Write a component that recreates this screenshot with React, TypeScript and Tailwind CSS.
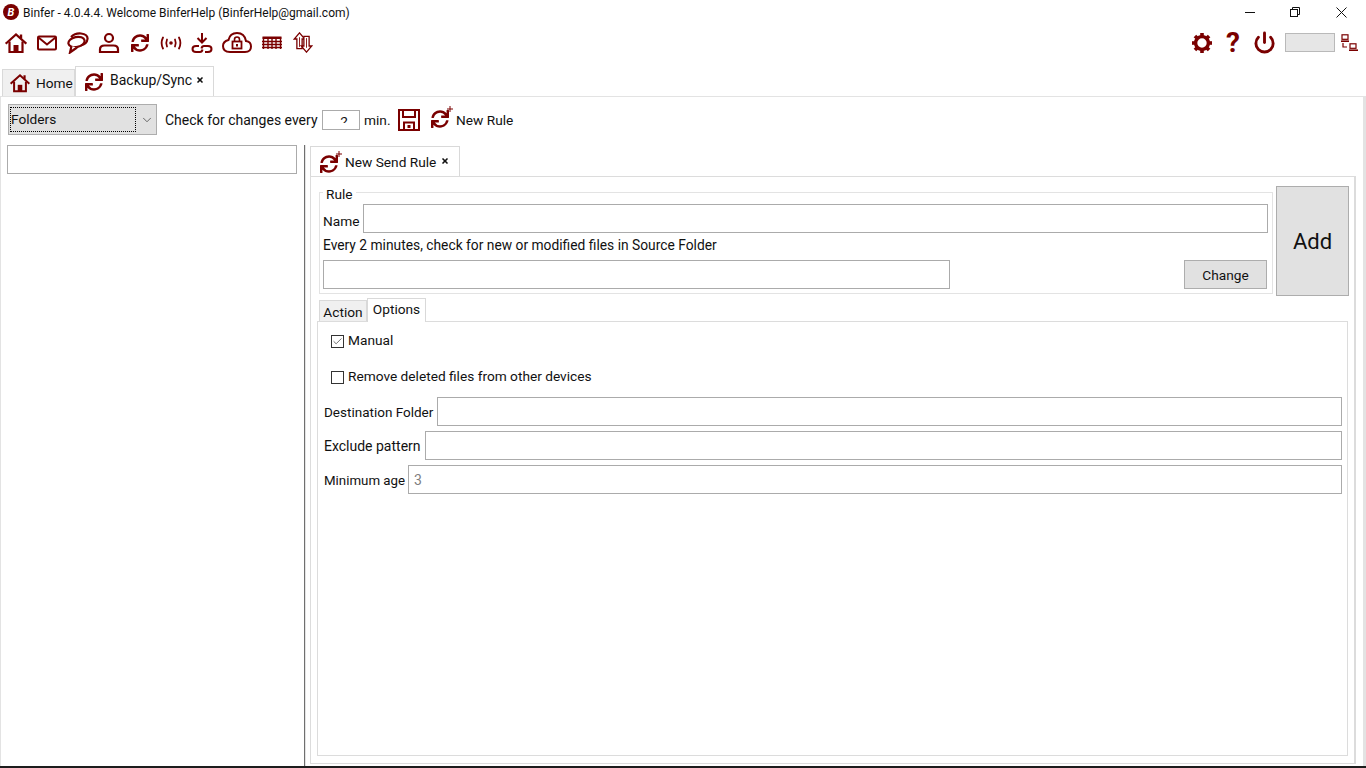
import { FaSync } from 'react-icons/fa';
import { Power, ChevronDown, Check, X } from 'lucide-react';

const red = '#7a0000';

function HomeIcon({ size = 22 }: { size?: number }) {
  return (
    <svg width={size} height={size} viewBox="0 0 22 22" fill="none" stroke={red} strokeWidth="2.2">
      <path d="M1.5 11 L11 2.5 L20.5 11" strokeLinecap="square" />
      <path d="M4.5 9.5 V20 H17.5 V9.5" />
      <path d="M16 2.5 V6.5" strokeWidth="2.4" />
      <rect x="8.5" y="13" width="5" height="7" fill={red} stroke="none" />
    </svg>
  );
}

function MailIcon() {
  return (
    <svg width="20" height="16" viewBox="0 0 20 16" fill="none" stroke={red} strokeWidth="2">
      <rect x="1" y="1.5" width="18" height="13" rx="1" />
      <path d="M1.5 2.5 L10 9.5 L18.5 2.5" />
    </svg>
  );
}

function ChatIcon() {
  return (
    <svg width="22" height="22" viewBox="0 0 22 22" fill="none" stroke={red} strokeWidth="2.2">
      <path d="M4 5 Q8 1 14 1.5 Q21 2.5 20.5 7 Q20 12 14 13.5" />
      <ellipse cx="9.5" cy="10" rx="8.2" ry="5" transform="rotate(-12 9.5 10)" />
      <path d="M4.5 14 L3 20.5 L10 15.5" fill="#fff" />
    </svg>
  );
}

function UserIcon() {
  return (
    <svg width="22" height="22" viewBox="0 0 22 22" fill="none" stroke={red} strokeWidth="2.2">
      <circle cx="11" cy="6" r="4" />
      <path d="M2 20 V17.5 Q2 13.5 6.5 13.5 H15.5 Q20 13.5 20 17.5 V20 Z" />
    </svg>
  );
}

function BroadcastIcon() {
  return (
    <svg width="22" height="14" viewBox="0 0 22 14" fill="none" stroke={red} strokeWidth="1.8" strokeLinecap="round">
      <circle cx="11" cy="7" r="1.8" fill={red} stroke="none" />
      <path d="M7 3.5 Q5.5 7 7 10.5" />
      <path d="M15 3.5 Q16.5 7 15 10.5" />
      <path d="M3 1.5 Q0.2 7 3 12.5" />
      <path d="M19 1.5 Q21.8 7 19 12.5" />
    </svg>
  );
}

function LinkDownIcon() {
  return (
    <svg width="22" height="22" viewBox="0 0 22 22" fill="none" stroke={red} strokeWidth="2">
      <path d="M11 1 V10" />
      <path d="M6.5 6 L11 10.5 L15.5 6" />
      <path d="M8 14 H5 Q1.5 14 1.5 17 Q1.5 20 5 20 H9 Q11 20 11.5 17.5" />
      <path d="M14 20 H17 Q20.5 20 20.5 17 Q20.5 14 17 14 H13 Q11 14 10.5 16.5" />
    </svg>
  );
}

function CloudLockIcon() {
  return (
    <svg width="30" height="21" viewBox="0 0 30 21" fill="none" stroke={red} strokeWidth="2">
      <path d="M8 20 H23 Q29 20 29 14.5 Q29 9.5 24 9 Q22.5 1 15 1 Q8 1 6.5 8 Q1 9.5 1 14 Q1 20 8 20 Z" />
      <rect x="10.5" y="9.5" width="9" height="7" strokeWidth="1.8" />
      <path d="M12.5 9.5 V7.5 Q12.5 5 15 5 Q17.5 5 17.5 7.5 V9.5" strokeWidth="1.6" />
      <rect x="14" y="12" width="2" height="2.5" fill={red} stroke="none" />
    </svg>
  );
}

function GridIcon() {
  return (
    <svg width="20" height="14" viewBox="0 0 20 14" fill="none" stroke={red} strokeWidth="1.4">
      <rect x="0.5" y="0.5" width="19" height="2.5" fill={red} stroke="none" />
      <path d="M0 5.5 H20 M0 8.5 H20 M0 11.5 H20" strokeWidth="1.6" />
      <path d="M1.5 1 V13 M6 1 V13 M10 1 V13 M14 1 V13 M18.5 1 V13" />
    </svg>
  );
}

function UpDownIcon() {
  return (
    <svg width="20" height="21" viewBox="0 0 22 24" fill="none" stroke={red} strokeWidth="1.5">
      <path d="M7 1 L1 8 H4 V19 H10 V8 H13 Z" fill="#fff" />
      <path d="M15 23 L21 16 H18 V5 H12 V16 H9 Z" fill="#fff" />
      <path d="M7 6 V17 M15 7 V18" strokeWidth="1" />
    </svg>
  );
}

function SaveIcon() {
  return (
    <svg width="22" height="22" viewBox="0 0 22 22" fill="none" stroke={red} strokeWidth="2">
      <rect x="1" y="1" width="20" height="20" />
      <path d="M5 1 V8 H17 V1" strokeWidth="2" />
      <path d="M6 21 V13.5 H16 V21" />
      <rect x="9.5" y="16" width="3" height="3" fill={red} stroke="none" />
    </svg>
  );
}

function GearIcon() {
  const teeth = [0, 45, 90, 135, 180, 225, 270, 315];
  return (
    <svg width="22" height="22" viewBox="0 0 22 22" fill="none" stroke={red}>
      <circle cx="11" cy="11" r="6.4" strokeWidth="3.4" />
      {teeth.map((a) => (
        <path key={a} d="M11 4 V1" strokeWidth="3.6" transform={`rotate(${a} 11 11)`} />
      ))}
    </svg>
  );
}

function SyncPlus({ size = 18 }: { size?: number }) {
  return (
    <span className="relative inline-flex h-[22px] w-[22px] items-end">
      <FaSync size={size} color={red} />
      <svg className="absolute right-0 top-0" width="6" height="6" viewBox="0 0 6 6" stroke={red} strokeWidth="1">
        <path d="M3 0 V6 M0 3 H6" />
      </svg>
    </span>
  );
}

function NetworkIcon() {
  return (
    <svg width="17" height="17" viewBox="0 0 17 17" fill="none" stroke={red} strokeWidth="1.2">
      <rect x="1" y="0.8" width="6" height="4.5" />
      <path d="M0 7.2 H8" strokeWidth="1.6" />
      <rect x="9" y="9.8" width="6" height="4.5" />
      <path d="M8 16.2 H17" strokeWidth="1.6" />
      <path d="M2 9 V13 H6" />
    </svg>
  );
}

function TabClose() {
  return <X size={8} strokeWidth={5} color="#111" />;
}

function Field({ className = '', value = '' }: { className?: string; value?: string }) {
  return (
    <input
      readOnly
      value={value}
      className={`h-[29px] border border-[#ababab] bg-white px-[5px] text-[14px] text-[#808080] outline-none ${className}`}
    />
  );
}

export default function App() {
  return (
    <div
      className="flex h-[768px] w-[1366px] flex-col overflow-hidden whitespace-nowrap bg-white text-[13.7px] text-[#111]"
      style={{ fontFamily: 'Roboto, sans-serif' }}
    >
      {/* Title bar */}
      <div className="flex h-[24px] shrink-0 items-center">
        <div className="ml-[3px] flex h-[16px] w-[16px] items-center justify-center rounded-full bg-[#7a0000] text-[11px] font-bold italic leading-none text-white">
          B
        </div>
        <span className="ml-[4px] pt-[2px] text-[12px]">Binfer - 4.0.4.4. Welcome BinferHelp (BinferHelp@gmail.com)</span>
        <div className="ml-auto flex items-center">
          <svg width="10" height="10" viewBox="0 0 10 10" stroke="#111" className="mr-[35px]">
            <path d="M0 5.5 H10" />
          </svg>
          <svg width="10" height="10" viewBox="0 0 10 10" fill="none" stroke="#111" className="mr-[36px]">
            <rect x="0.5" y="2.5" width="7" height="7" />
            <path d="M2.5 2.5 V0.5 H9.5 V7.5 H7.5" />
          </svg>
          <svg width="11" height="11" viewBox="0 0 11 11" stroke="#111" className="mr-[19px]">
            <path d="M0.5 0.5 L10.5 10.5 M10.5 0.5 L0.5 10.5" />
          </svg>
        </div>
      </div>

      {/* Toolbar */}
      <div className="flex h-[42px] shrink-0 items-center pb-[5px]">
        <div className="ml-[5px] flex w-[22px] justify-center"><HomeIcon /></div>
        <div className="ml-[9px] flex w-[22px] justify-center"><MailIcon /></div>
        <div className="ml-[9px] flex w-[22px] justify-center"><ChatIcon /></div>
        <div className="ml-[9px] flex w-[22px] justify-center"><UserIcon /></div>
        <div className="ml-[9px] flex w-[22px] justify-center"><FaSync size={18} color={red} /></div>
        <div className="ml-[9px] flex w-[22px] justify-center"><BroadcastIcon /></div>
        <div className="ml-[9px] flex w-[22px] justify-center"><LinkDownIcon /></div>
        <div className="ml-[9px] flex w-[30px] justify-center"><CloudLockIcon /></div>
        <div className="ml-[9px] flex w-[22px] justify-center"><GridIcon /></div>
        <div className="ml-[9px] flex w-[22px] justify-center"><UpDownIcon /></div>
        <div className="ml-auto flex items-center">
          <GearIcon />
          <span className="ml-[12px] w-[16px] text-center text-[28px] font-bold leading-none text-[#7a0000]">?</span>
          <Power size={23} strokeWidth={3} color={red} className="ml-[12px]" />
          <div className="ml-[9px] h-[19px] w-[50px] border border-[#b9b9b9] bg-[#e6e6e6]" />
          <div className="ml-[6px] mr-[8px]"><NetworkIcon /></div>
        </div>
      </div>

      {/* Main tabs */}
      <div className="flex h-[30px] shrink-0 items-end pl-[2px]">
        <div className="flex h-[27px] w-[73px] items-center border border-b-0 border-[#d9d9d9] bg-[#f0f0f0] pl-[7px]">
          <HomeIcon size={20} />
          <span className="ml-[6px]">Home</span>
        </div>
        <div className="flex h-[30px] w-[139px] items-center border border-b-0 border-[#d9d9d9] bg-white pl-[9px]">
          <FaSync size={18} color={red} />
          <span className="ml-[7px] pb-[2px] text-[14px]">Backup/Sync</span>
          <span className="mb-[3px] ml-[4px]"><TabClose /></span>
        </div>
      </div>

      {/* Backup page */}
      <div className="flex min-h-0 flex-1 flex-col border-l border-r-[3px] border-t border-[#e3e3e3] pl-[6px] pr-[7px]">
        <div className="flex h-[48px] shrink-0 items-center pb-[3px] pl-[1px]">
          <div className="flex h-[31px] w-[149px] shrink-0 items-center border border-[#adadad] bg-[#e1e1e1] pl-px">
            <div className="flex h-[25px] w-[126px] items-center border border-dotted border-black">Folders</div>
            <ChevronDown size={14} strokeWidth={1.2} color="#333" className="ml-[4px]" />
          </div>
          <span className="ml-[8px] w-[153px] pt-[2px] text-[14px]">Check for changes every</span>
          <div className="ml-[4px] h-[20px] w-[38px] border border-[#ababab] pr-[11px] pt-px">
            <div className="h-[11px] overflow-hidden text-right leading-[18px]">2</div>
          </div>
          <span className="ml-[4px] w-[26px] pt-[2px]">min.</span>
          <div className="ml-[8px]"><SaveIcon /></div>
          <div className="ml-[11px]"><SyncPlus /></div>
          <span className="ml-[3px] pt-[2px]">New Rule</span>
        </div>

        <div className="flex min-h-0 flex-1">
          {/* Left list */}
          <div className="w-[290px] shrink-0">
            <Field className="w-[290px]" />
          </div>
          <div className="ml-[7px] h-full w-[2px] shrink-0 border-l border-r border-l-[#6f6f6f] border-r-[#e3e3e3]" />

          {/* Rule editor */}
          <div className="ml-[4px] flex min-w-0 flex-1 flex-col pb-[2px] pt-px">
            <div className="flex h-[31px] w-[150px] shrink-0 items-center border border-b-0 border-[#d9d9d9] bg-white pl-[9px]">
              <SyncPlus />
              <span className="ml-[3px]">New Send Rule</span>
              <span className="mb-[3px] ml-[5px]"><TabClose /></span>
            </div>
            <div className="-mt-px flex min-h-0 flex-1 flex-col border border-r-[2px] border-[#dcdcdc] pb-[7px] pl-[6px] pr-[5px] pt-[9px]">
              <div className="flex h-[110px] shrink-0 pl-[2px]">
                <div className="relative mt-[6px] h-[102px] w-[954px] shrink-0 border border-[#e3e3e3] pl-[3px] pt-[11px]">
                  <span className="absolute -top-[7px] left-[3px] bg-white px-[3px] leading-[16px]">Rule</span>
                  <div className="flex h-[29px] items-center">
                    <span className="w-[40px] pt-[5px]">Name</span>
                    <Field className="w-[905px]" />
                  </div>
                  <div className="flex h-[27px] items-center pb-[2px] text-[13.8px]">Every 2 minutes, check for new or modified files in Source Folder</div>
                  <div className="flex items-center">
                    <Field className="w-[627px]" />
                    <button className="ml-[234px] h-[29px] w-[83px] border border-[#adadad] bg-[#e1e1e1] pt-[2px]">Change</button>
                  </div>
                </div>
                <button className="ml-[3px] h-[110px] w-[73px] shrink-0 border border-[#adadad] bg-[#e1e1e1] text-[22px]">Add</button>
              </div>

              <div className="mt-[2px] flex h-[24px] shrink-0 items-end pl-[2px]">
                <div className="flex h-[22px] w-[48px] items-center justify-center border border-b-0 border-[#d9d9d9] bg-[#f0f0f0] pt-[2px]">Action</div>
                <div className="z-10 flex h-[24px] w-[59px] items-center justify-center border border-b-0 border-[#d9d9d9] bg-white pb-[2px]">Options</div>
              </div>
              <div className="-mt-px mr-px flex min-h-0 flex-1 flex-col border border-[#dcdcdc] bg-white pl-[6px] pr-[5px]">
                <label className="mt-[12px] flex h-[14px] items-center pl-[7px]">
                  <span className="flex h-[13px] w-[13px] items-center justify-center border border-[#333]">
                    <Check size={11} strokeWidth={1.5} color="#333" />
                  </span>
                  <span className="ml-[4px] pb-[2px]">Manual</span>
                </label>
                <label className="mt-[22px] flex h-[14px] items-center pl-[7px]">
                  <span className="h-[13px] w-[13px] border border-[#333]" />
                  <span className="ml-[4px] pb-[2px]">Remove deleted files from other devices</span>
                </label>
                <div className="mt-[13px] flex items-center">
                  <span className="w-[113px] shrink-0 pt-[2px] text-[13.5px]">Destination Folder</span>
                  <Field className="min-w-0 flex-1" />
                </div>
                <div className="mt-[5px] flex items-center">
                  <span className="w-[101px] shrink-0 pt-[2px] text-[14px]">Exclude pattern</span>
                  <Field className="min-w-0 flex-1" />
                </div>
                <div className="mt-[5px] flex items-center">
                  <span className="w-[84px] shrink-0 pt-[2px] text-[13.3px]">Minimum age</span>
                  <Field className="min-w-0 flex-1" value="3" />
                </div>
              </div>
            </div>
          </div>
        </div>
      </div>

      <div className="h-[2px] shrink-0 bg-[#1d1d1d]" />
    </div>
  );
}
